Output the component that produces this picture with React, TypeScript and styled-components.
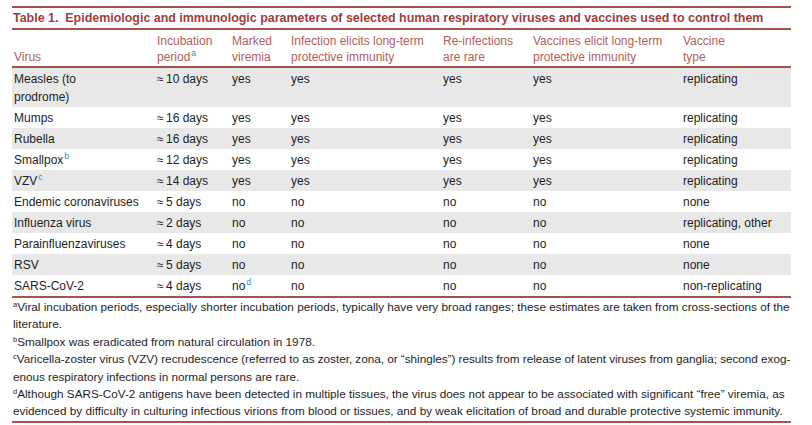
import React from 'react';
import styled, { createGlobalStyle } from 'styled-components';

const GlobalStyle = createGlobalStyle`
  body {
    margin: 0;
    background: #ffffff;
    font-family: 'Liberation Sans', Arial, sans-serif;
  }
`;

const RULE = '#a9514d';

const Wrapper = styled.div`
  width: 779px;
  margin: 6px 0 0 12px;
  color: #222;
`;

const TitleBar = styled.div`
  border-top: 2px solid ${RULE};
  border-bottom: 2px solid ${RULE};
  padding: 3px 0 2px 1px;
  font-size: 12.45px;
  line-height: 15px;
  font-weight: bold;
  color: #9c3f3b;
  white-space: nowrap;
`;

const Table = styled.table`
  width: 100%;
  border-collapse: collapse;
  table-layout: fixed;
  font-size: 12px;
`;

const HeadCell = styled.th`
  text-align: left;
  vertical-align: bottom;
  font-weight: normal;
  color: #b0605b;
  line-height: 16px;
  padding: 3px 2px 1px 2px;
  border-bottom: 2px solid ${RULE};
  white-space: nowrap;
`;

const Row = styled.tr<{ $shade: boolean; $last?: boolean }>`
  background: ${(p) => (p.$shade ? '#e8e8e8' : '#ffffff')};
  ${(p) => (p.$last ? `border-bottom: 2px solid ${RULE};` : '')}
`;

const Cell = styled.td`
  vertical-align: top;
  line-height: 18px;
  padding: 1.5px 2px 1.5px 2px;
  color: #1e1e1e;
  white-space: nowrap;
`;

const Mark = styled.sup`
  color: #2196d6;
  font-size: 8.5px;
  vertical-align: 5px;
  line-height: 0;
  margin-left: 1px;
`;

const Notes = styled.div`
  border-bottom: 2px solid ${RULE};
  padding: 0 0 1px 1px;
  font-size: 11.75px;
  line-height: 17.4px;
  color: #1e1e1e;
`;

const Note = styled.p`
  margin: 0;
`;

const NoteLine = styled.span`
  display: block;
  white-space: nowrap;
  letter-spacing: -0.03px;
`;

const NoteMark = styled.sup`
  font-size: 7.5px;
  vertical-align: 4px;
  line-height: 0;
`;

type VirusRow = {
  name: React.ReactNode;
  period: string;
  viremia: React.ReactNode;
  infection: string;
  rare: string;
  vaccine: string;
  type: string;
};

const approx = (n: number) => `\u2248\u2009${n} days`;

const rows: VirusRow[] = [
  { name: <>Measles (to<br />prodrome)</>, period: approx(10), viremia: 'yes', infection: 'yes', rare: 'yes', vaccine: 'yes', type: 'replicating' },
  { name: 'Mumps', period: approx(16), viremia: 'yes', infection: 'yes', rare: 'yes', vaccine: 'yes', type: 'replicating' },
  { name: 'Rubella', period: approx(16), viremia: 'yes', infection: 'yes', rare: 'yes', vaccine: 'yes', type: 'replicating' },
  { name: <>Smallpox<Mark>b</Mark></>, period: approx(12), viremia: 'yes', infection: 'yes', rare: 'yes', vaccine: 'yes', type: 'replicating' },
  { name: <>VZV<Mark>c</Mark></>, period: approx(14), viremia: 'yes', infection: 'yes', rare: 'yes', vaccine: 'yes', type: 'replicating' },
  { name: 'Endemic coronaviruses', period: approx(5), viremia: 'no', infection: 'no', rare: 'no', vaccine: 'no', type: 'none' },
  { name: 'Influenza virus', period: approx(2), viremia: 'no', infection: 'no', rare: 'no', vaccine: 'no', type: 'replicating, other' },
  { name: 'Parainfluenzaviruses', period: approx(4), viremia: 'no', infection: 'no', rare: 'no', vaccine: 'no', type: 'none' },
  { name: 'RSV', period: approx(5), viremia: 'no', infection: 'no', rare: 'no', vaccine: 'no', type: 'none' },
  { name: 'SARS-CoV-2', period: approx(4), viremia: <>no<Mark>d</Mark></>, infection: 'no', rare: 'no', vaccine: 'no', type: 'non-replicating' },
];

const widths = [143, 75, 59, 152, 90, 150, 110];

export default function App() {
  return (
    <Wrapper>
      <GlobalStyle />
      <TitleBar>
        Table 1.&nbsp; Epidemiologic and immunologic parameters of selected human respiratory viruses and vaccines used to control them
      </TitleBar>
      <Table>
        <colgroup>
          {widths.map((w, i) => (
            <col key={i} style={{ width: w }} />
          ))}
        </colgroup>
        <thead>
          <tr>
            <HeadCell>Virus</HeadCell>
            <HeadCell>
              Incubation
              <br />
              period<Mark>a</Mark>
            </HeadCell>
            <HeadCell>
              Marked
              <br />
              viremia
            </HeadCell>
            <HeadCell>
              Infection elicits long-term
              <br />
              protective immunity
            </HeadCell>
            <HeadCell>
              Re-infections
              <br />
              are rare
            </HeadCell>
            <HeadCell>
              Vaccines elicit long-term
              <br />
              protective immunity
            </HeadCell>
            <HeadCell>
              Vaccine
              <br />
              type
            </HeadCell>
          </tr>
        </thead>
        <tbody>
          {rows.map((r, i) => (
            <Row key={i} $shade={i % 2 === 0} $last={i === rows.length - 1}>
              <Cell>{r.name}</Cell>
              <Cell>{r.period}</Cell>
              <Cell>{r.viremia}</Cell>
              <Cell>{r.infection}</Cell>
              <Cell>{r.rare}</Cell>
              <Cell>{r.vaccine}</Cell>
              <Cell>{r.type}</Cell>
            </Row>
          ))}
        </tbody>
      </Table>
      <Notes>
        <Note>
          <NoteMark>a</NoteMark>Viral incubation periods, especially shorter incubation periods, typically have very broad ranges; these estimates are taken from cross-sections of the literature.
        </Note>
        <Note>
          <NoteMark>b</NoteMark>Smallpox was eradicated from natural circulation in 1978.
        </Note>
        <Note>
          <NoteLine>
            <NoteMark>c</NoteMark>Varicella-zoster virus (VZV) recrudescence (referred to as zoster, zona, or &ldquo;shingles&rdquo;) results from release of latent viruses from ganglia; second exog-
          </NoteLine>
          <NoteLine>enous respiratory infections in normal persons are rare.</NoteLine>
        </Note>
        <Note>
          <NoteMark>d</NoteMark>Although SARS-CoV-2 antigens have been detected in multiple tissues, the virus does not appear to be associated with significant &ldquo;free&rdquo; viremia, as evidenced by difficulty in culturing infectious virions from blood or tissues, and by weak elicitation of broad and durable protective systemic immunity.
        </Note>
      </Notes>
    </Wrapper>
  );
}
